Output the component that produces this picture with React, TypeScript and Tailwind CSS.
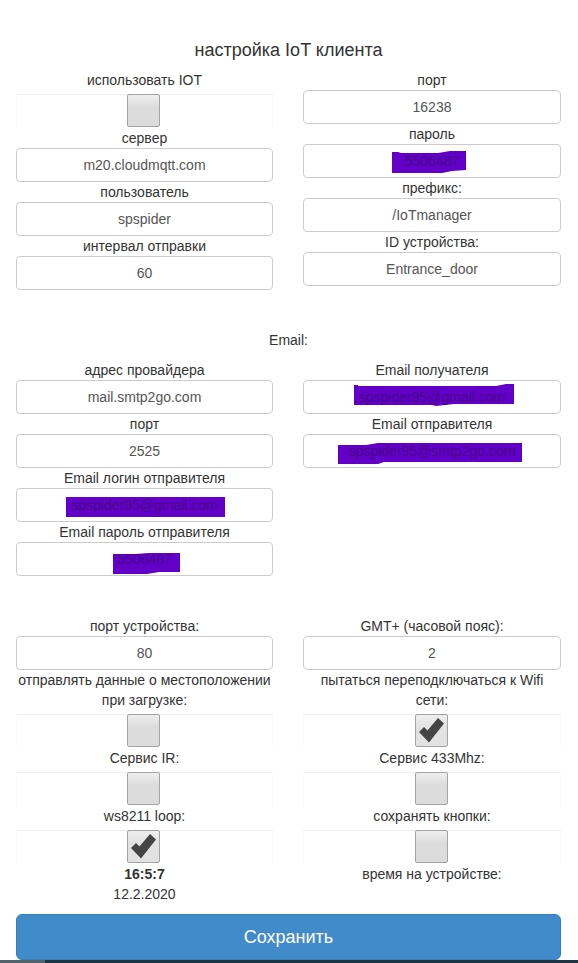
import { useState, type ReactNode } from "react";

type Mark = { width: number; height: number; shift: string; path: string };

const marks: Record<string, Mark> = {
  password: {
    width: 74,
    height: 22,
    shift: "left-[89px] top-[7px]",
    path: "M0 1L6 1L9 2L46 2L58 0L74 0V19L60 20L50 22H0Z",
  },
  recipient: {
    width: 160,
    height: 22,
    shift: "left-[51px] top-[4px]",
    path: "M0 1H4V2H142L152 0H160V20L100 20L82 22L78 21H0Z",
  },
  sender: {
    width: 184,
    height: 22,
    shift: "left-[35px] top-[8px]",
    path: "M0 3H28L40 1L54 1H184V20H46L40 22H0Z",
  },
  login: {
    width: 159,
    height: 20,
    shift: "left-[50px] top-[9px]",
    path: "M0 0H159V20H0Z",
  },
  mailPassword: {
    width: 67,
    height: 22,
    shift: "left-[97px] top-[10px]",
    path: "M0 2H22L36 1H67V20H46L34 22H0Z",
  },
};

function Field({ id, label, value, mark }: { id: string; label: string; value: string; mark?: Mark }) {
  const [text, setText] = useState(value);
  return (
    <div>
      <label htmlFor={id} className="block text-center">
        {label}
      </label>
      <div className="relative">
        {mark && (
          <svg
            className={"absolute " + mark.shift}
            width={mark.width}
            height={mark.height}
            viewBox={`0 0 ${mark.width} ${mark.height}`}
            aria-hidden="true"
          >
            <path d={mark.path} fill="#6200c8" />
          </svg>
        )}
        <input
          id={id}
          type="text"
          value={text}
          onChange={(e) => setText(e.target.value)}
          className={
            "relative block h-[34px] w-full rounded border border-[#ccc] bg-transparent px-3 text-center " +
            (mark ? "text-[#480088]" : "text-[#555]")
          }
        />
      </div>
    </div>
  );
}

function Toggle({ id, label, checked = false }: { id: string; label: string; checked?: boolean }) {
  const [on, setOn] = useState(checked);
  return (
    <div>
      <label htmlFor={id} className="block text-center">
        {label}
      </label>
      <div className="mt-1 flex h-[34px] justify-center border-x border-t border-x-[#fafafa] border-t-[#eee] pr-0.5">
        <span className="relative -mt-px block size-[33px]">
          <input
            id={id}
            type="checkbox"
            checked={on}
            onChange={(e) => setOn(e.target.checked)}
            className="block size-full appearance-none rounded-[2px] border border-[#a3a3a3] bg-linear-to-b from-[#eee] to-[#dcdcdc] to-40% checked:to-[#e2e2e2]"
          />
          {on && (
            <svg className="pointer-events-none absolute inset-0" width="33" height="33" viewBox="0 0 33 33" aria-hidden="true">
              <path d="M4 18L9 13L12.5 16.5L23 4L29 9.5L14 28.5Z" fill="#444" />
            </svg>
          )}
        </span>
      </div>
    </div>
  );
}

function Columns({ children }: { children: ReactNode }) {
  return <div className="grid grid-cols-[257fr_258fr] gap-[30px]">{children}</div>;
}

export default function App() {
  return (
    <div className="bg-white font-['Liberation_Sans',Arial,sans-serif] text-[14px] leading-5 text-[#333]">
      <form className="pr-[17px] pl-4 pt-10" onSubmit={(e) => e.preventDefault()}>
        <h1 className="mb-2.5 text-center text-[18px] leading-5">настройка IoT клиента</h1>
        <Columns>
          <div>
            <Toggle id="iot" label="использовать IOT" />
            <Field id="server" label="сервер" value="m20.cloudmqtt.com" />
            <Field id="user" label="пользователь" value="spspider" />
            <Field id="interval" label="интервал отправки" value="60" />
          </div>
          <div>
            <Field id="port" label="порт" value="16238" />
            <Field id="password" label="пароль" value="5506487" mark={marks.password} />
            <Field id="prefix" label="префикс:" value="/IoTmanager" />
            <Field id="device" label="ID устройства:" value="Entrance_door" />
          </div>
        </Columns>

        <h2 className="mt-10 mb-2.5 text-center">Email:</h2>
        <Columns>
          <div>
            <Field id="provider" label="адрес провайдера" value="mail.smtp2go.com" />
            <Field id="mail-port" label="порт" value="2525" />
            <Field id="login" label="Email логин отправителя" value="spspider95@gmail.com" mark={marks.login} />
            <Field id="mail-password" label="Email пароль отправителя" value="5506487" mark={marks.mailPassword} />
          </div>
          <div>
            <Field id="recipient" label="Email получателя" value="spspider95@gmail.com" mark={marks.recipient} />
            <Field id="sender" label="Email отправителя" value="spspider95@smtp2go.com" mark={marks.sender} />
          </div>
        </Columns>

        <div className="mt-10">
          <Columns>
            <div>
              <Field id="device-port" label="порт устройства:" value="80" />
              <Toggle id="location" label="отправлять данные о местоположении при загрузке:" />
              <Toggle id="ir" label="Сервис IR:" />
              <Toggle id="loop" label="ws8211 loop:" checked />
              <p className="text-center font-bold">16:5:7</p>
              <p className="text-center">12.2.2020</p>
            </div>
            <div>
              <Field id="gmt" label="GMT+ (часовой пояс):" value="2" />
              <Toggle id="wifi" label="пытаться переподключаться к Wifi сети:" checked />
              <Toggle id="mhz" label="Сервис 433Mhz:" />
              <Toggle id="buttons" label="сохранять кнопки:" />
              <p className="text-center">время на устройстве:</p>
            </div>
          </Columns>
        </div>

        <button
          type="submit"
          className="mt-2.5 block h-[46px] w-full rounded-md border border-[#357ebd] bg-[#428bca] text-[18px] text-white"
        >
          Сохранить
        </button>
      </form>
      <div className="flex h-[3px] bg-[#20343f]">
        <div className="w-[45px] bg-[#54636b]" />
      </div>
    </div>
  );
}
